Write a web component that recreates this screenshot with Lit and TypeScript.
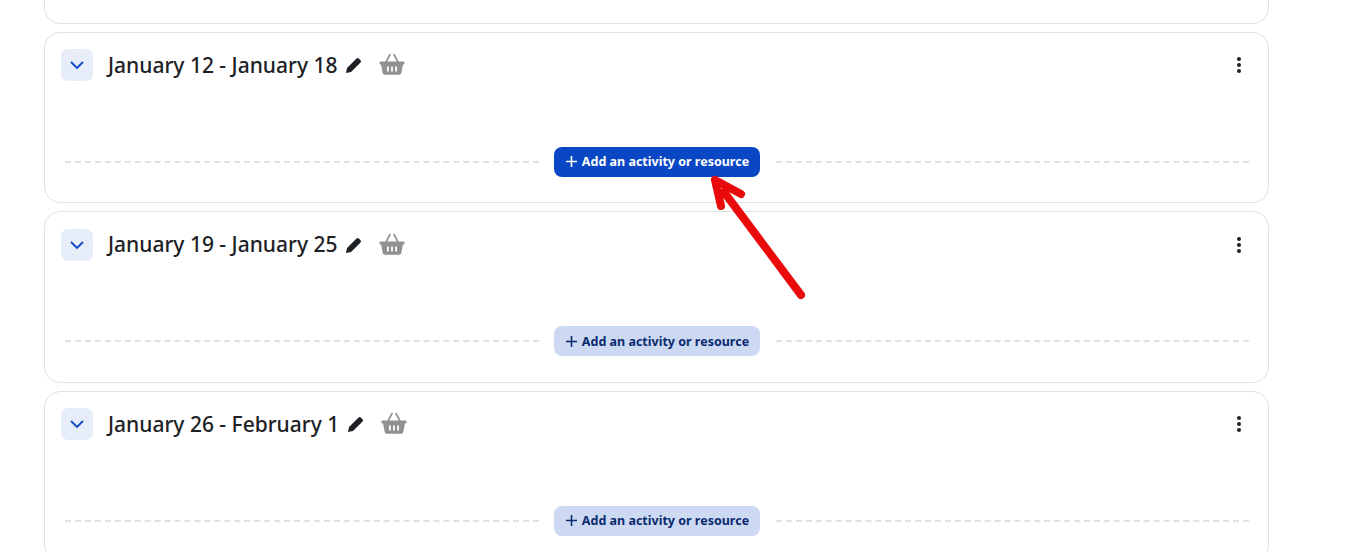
import { LitElement, html, css, svg } from "lit";
import { customElement } from "lit/decorators.js";

const weeks = [
  { title: "January 12 - January 18", active: true },
  { title: "January 19 - January 25", active: false },
  { title: "January 26 - February 1", active: false },
];

const pencil = svg`<path fill="currentColor" d="M1 17l1-5L11.5 2.5a1.6 1.6 0 0 1 2.3 0l1.7 1.7a1.6 1.6 0 0 1 0 2.3L6 16z"/>`;
const basket = svg`<path fill="none" stroke="currentColor" stroke-width="1.6" stroke-linecap="round" d="M7 10 11 2.5M19 10 15 2.5"/><path fill="currentColor" fill-rule="evenodd" d="M1.5 9.5h23a1 1 0 0 1 1 1v1a1 1 0 0 1-1 1h-.6l-1.6 8.6a2 2 0 0 1-2 1.6H5.7a2 2 0 0 1-2-1.6L2.1 12.5h-.6a1 1 0 0 1-1-1v-1a1 1 0 0 1 1-1zM8 14.5v5h1.8v-5zm4.1 0v5h1.8v-5zm4.1 0v5H18v-5z"/>`;

@customElement("app-root")
export class AppRoot extends LitElement {
  static styles = css`
    :host { display: block; height: 552px; overflow: hidden; position: relative; background: #fff;
      font-family: "Noto Sans", "Open Sans", sans-serif; }
    .list { display: flex; flex-direction: column; gap: 8px; width: 1225px; margin: -148px 0 0 44px; }
    .card { box-sizing: border-box; height: 171.5px; flex: none; border: 1px solid #dee2e6; border-radius: 16px;
      padding: 16px 20px 0 16px; background: #fff; }
    .head { display: flex; align-items: center; height: 33px; }
    .toggle { width: 32px; height: 32px; border-radius: 7px; background: #e7ecf9; display: flex;
      align-items: center; justify-content: center; color: #0f47c7; flex: none; }
    .title { margin-left: 15px; font-size: 21px; font-weight: 500; color: #1d2125; line-height: 33px; white-space: nowrap; }
    .pencil { margin-left: 8px; color: #1d2125; display: block; flex: none; }
    .basket { margin-left: 16px; color: #919191; display: block; flex: none; position: relative; top: -1px; }
    .more { margin-left: auto; width: 4px; display: flex; flex-direction: column; gap: 2px; margin-right: 7px; }
    .more i { display: block; width: 4px; height: 4px; border-radius: 50%; background: #1d2125; }
    .add { display: flex; align-items: center; margin: 65px -1px 0 4px; }
    .dash { flex: 1; border-top: 2px dashed #dee2e6; height: 0; }
    .btn { flex: none; box-sizing: border-box; width: 206px; height: 30px; margin: 0 15.5px; border-radius: 8px;
      background: #cdd9f3; color: #0a2a6e; display: flex; align-items: center; justify-content: center; gap: 4px;
      font-size: 12.5px; font-weight: 700; white-space: nowrap; }
    .btn.on { background: #0a47c5; color: #fff; }
    .arrow { position: absolute; left: 700px; top: 165px; pointer-events: none; }
  `;

  render() {
    return html`
      <div class="list">
        <div class="card"></div>
        ${weeks.map((w) => html`
          <div class="card">
            <div class="head">
              <div class="toggle">
                <svg width="16" height="16" viewBox="0 0 16 16"><path d="M2 5l6 6 6-6" fill="none" stroke="currentColor" stroke-width="1.8"/></svg>
              </div>
              <span class="title">${w.title}</span>
              <svg class="pencil" width="18" height="18" viewBox="0 0 18 18">${pencil}</svg>
              <svg class="basket" width="26" height="24" viewBox="0 0 26 24">${basket}</svg>
              <div class="more"><i></i><i></i><i></i></div>
            </div>
            <div class="add">
              <div class="dash"></div>
              <div class="btn ${w.active ? "on" : ""}">
                <svg width="13" height="13" viewBox="0 0 13 13"><path d="M6.5 1v11M1 6.5h11" stroke="currentColor" stroke-width="1.6" fill="none"/></svg>
                <span>Add an activity or resource</span>
              </div>
              <div class="dash"></div>
            </div>
          </div>`)}
      </div>
      <svg class="arrow" width="120" height="140" viewBox="0 0 120 140">
        <path d="M101 130 24 27M15 15 21 41M15 15 41 29" fill="none" stroke="#e90b0b" stroke-width="8" stroke-linecap="round" stroke-linejoin="round"/>
      </svg>
    `;
  }
}
